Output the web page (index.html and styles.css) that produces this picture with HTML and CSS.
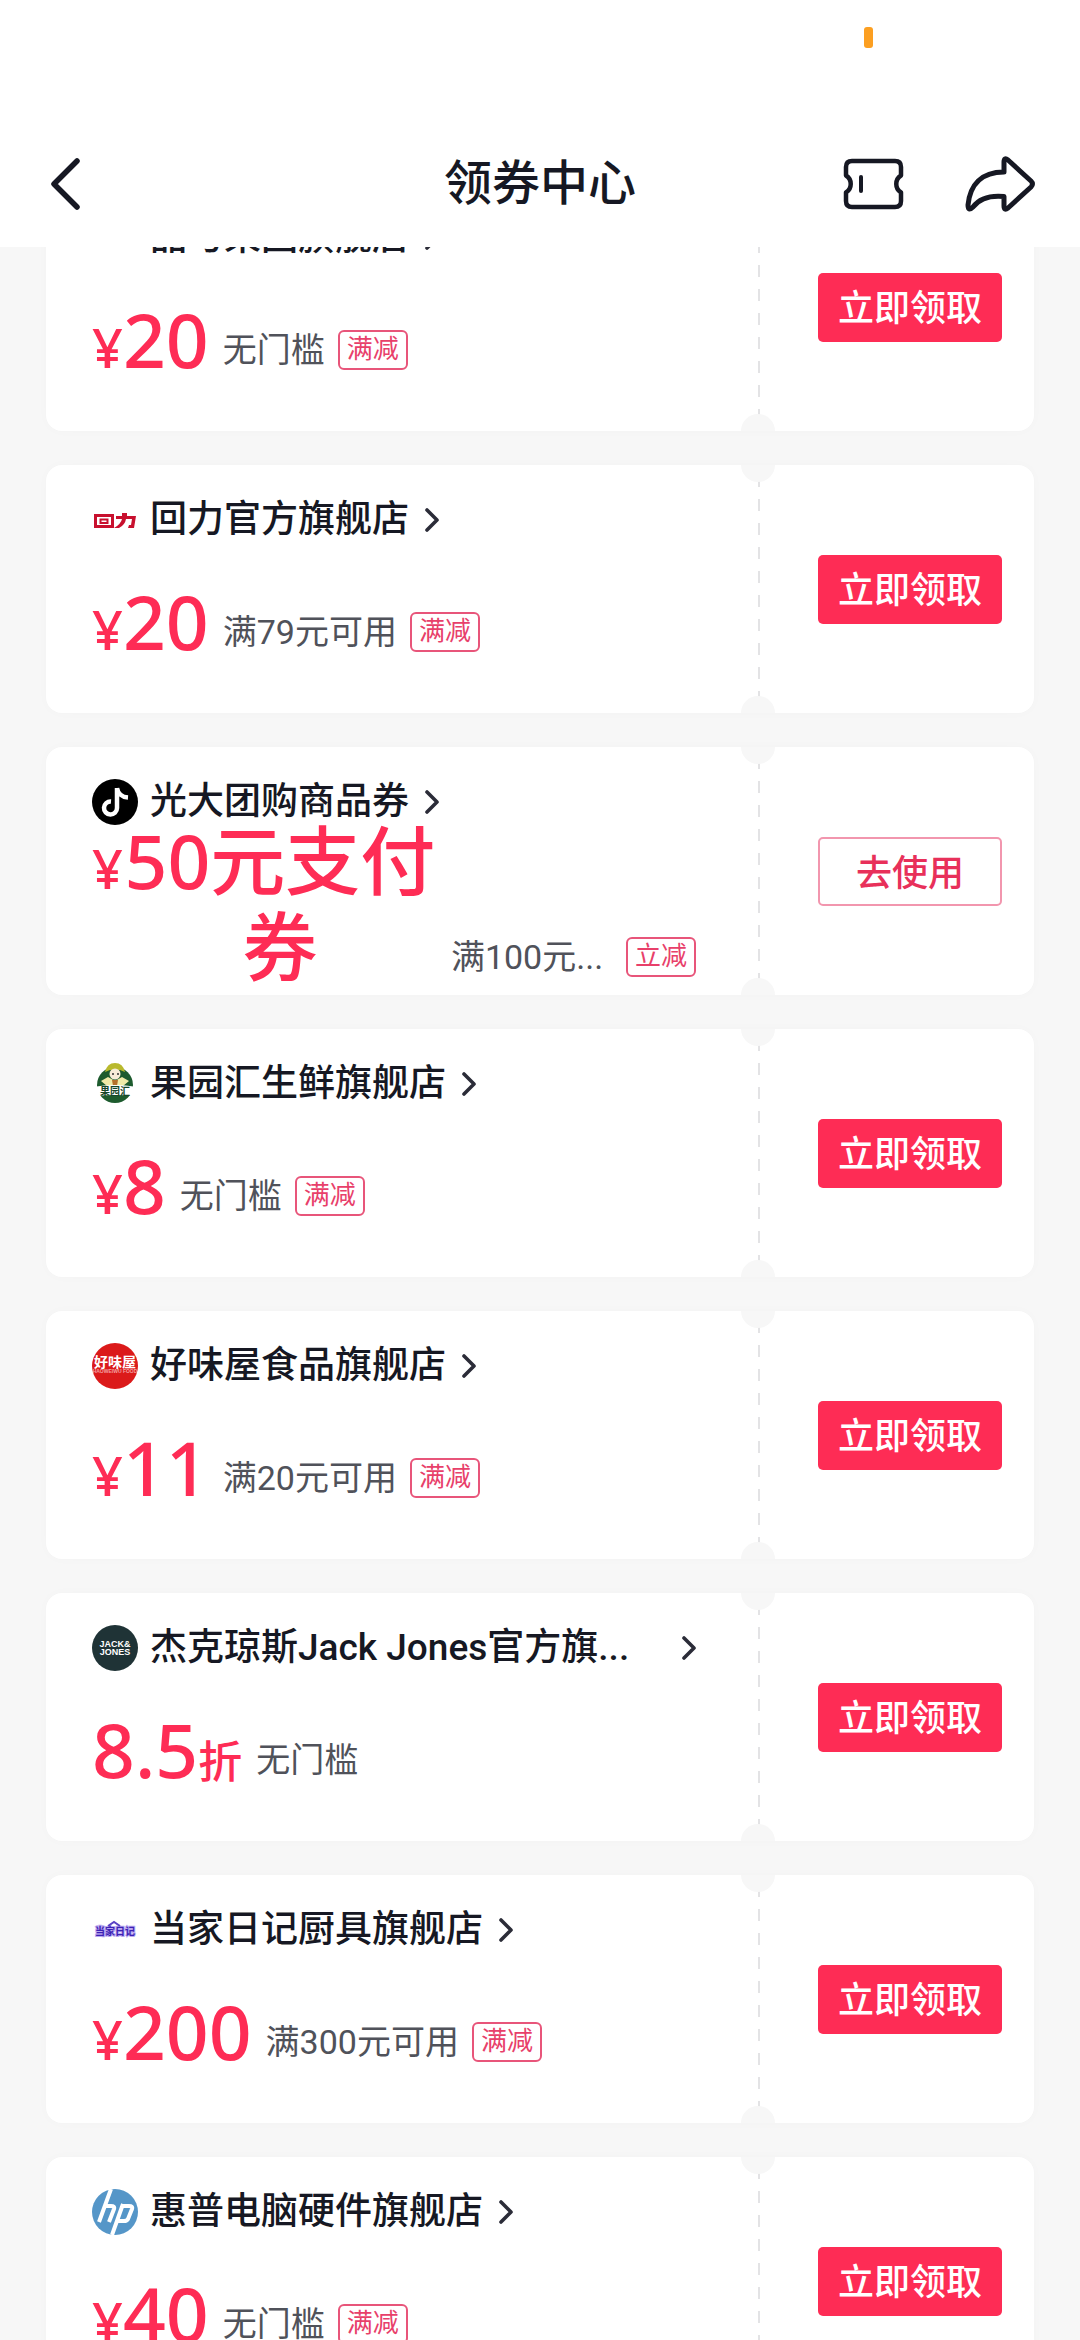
FILE: index.html
```html
<!DOCTYPE html>
<html lang="zh-CN">
<head>
<meta charset="utf-8">
<meta name="viewport" content="width=device-width, initial-scale=1">
<title>领券中心</title>
<link rel="stylesheet" href="styles.css">
</head>
<body>
<svg class="defs" aria-hidden="true">
  <symbol id="chevron" viewBox="0 0 14 24"><path d="M2 2L12 12L2 22" fill="none" stroke="#2b2c38" stroke-width="3.600" stroke-linecap="round" stroke-linejoin="round"/></symbol>
</svg>
<header class="topbar">
  <div class="status"><span class="status-dot"></span></div>
  <nav class="nav">
    <button class="icon-button nav-back" aria-label="返回">
      <svg width="60" height="60" viewBox="0 0 60 60"><path d="M33 7L10 30L33 53" fill="none" stroke="#161823" stroke-width="5.500" stroke-linecap="round" stroke-linejoin="round"/></svg>
    </button>
    <h1 class="title">领券中心</h1>
    <div class="nav-actions">
      <button class="icon-button" aria-label="我的券">
        <svg width="64" height="56" viewBox="0 0 64 56"><path d="M10 5H53Q59 5 59 11V19.500A10 10 0 0 0 59 36.500V45Q59 51 53 51H10Q4 51 4 45V36.500A10 10 0 0 0 4 19.500V11Q4 5 10 5Z" fill="none" stroke="#161823" stroke-width="4.500" stroke-linejoin="round"/><path d="M19 21V35" stroke="#161823" stroke-width="4" stroke-linecap="round"/></svg>
      </button>
      <button class="icon-button" aria-label="分享">
        <svg width="72" height="60" viewBox="0 0 72 60"><path d="M40 8Q40 3 44 6L67 27Q70 30 67 33L44 54Q40 57 40 52V42.500C24 41 15 45 9 53Q4 58 4 51C6 31 17 18 40 18Z" fill="none" stroke="#161823" stroke-width="5" stroke-linejoin="round"/></svg>
      </button>
    </div>
  </nav>
</header>
<main class="list">
  <article class="card">
    <div class="info">
      <a class="shop" href="#"><span class="logo"></span><span class="name">品与果园旗舰店</span><svg class="chevron"><use href="#chevron"/></svg></a>
      <div class="offer"><div class="terms"><p class="price"><span class="yen">¥</span><span class="amount">20</span></p><span class="condition">无门槛</span><span class="tag">满减</span></div></div>
    </div>
    <div class="action"><button class="claim">立即领取</button></div>
  </article>
  <article class="card">
    <div class="info">
      <a class="shop" href="#"><svg class="logo" viewBox="0 0 46 46"><g fill="none" stroke="#c8102e" stroke-width="3"><path d="M3.500 18.500H20.500V29.500H3.500Z"/><path d="M8.500 22.500H15.500V26H8.500Z" stroke-width="2"/></g><path d="M24 19H30V16H35V19H44L42 31H36L37 28H39L40 22H34Q33 28 27 31H22Q29 27 30 22H24Z" fill="#c8102e"/></svg><span class="name">回力官方旗舰店</span><svg class="chevron"><use href="#chevron"/></svg></a>
      <div class="offer"><div class="terms"><p class="price"><span class="yen">¥</span><span class="amount">20</span></p><span class="condition">满79元可用</span><span class="tag">满减</span></div></div>
    </div>
    <div class="action"><button class="claim">立即领取</button></div>
  </article>
  <article class="card">
    <div class="info">
      <a class="shop" href="#"><svg class="logo" viewBox="0 0 46 46"><circle cx="23" cy="23" r="23"/><path d="M25 9V29A6.500 6.500 0 1 1 19 22.500M25 9C26 15 29 18 36 18.500" fill="none" stroke="#fff" stroke-width="4.500"/></svg><span class="name">光大团购商品券</span><svg class="chevron"><use href="#chevron"/></svg></a>
      <div class="offer"><div class="terms terms-full"><p class="price"><span class="yen">¥</span><span class="amount">50元支付券</span></p><span class="condition">满100元...</span><span class="tag">立减</span></div></div>
    </div>
    <div class="action"><button class="claim claim-use">去使用</button></div>
  </article>
  <article class="card">
    <div class="info">
      <a class="shop" href="#"><svg class="logo" viewBox="0 0 46 46"><circle cx="23" cy="24" r="18" fill="#1d5b2e"/><path d="M13 11Q15 2 23 2Q31 2 33 11L28 9H18Z" fill="#b9b92e"/><circle cx="23" cy="13" r="5.500" fill="#f7ecd8"/><circle cx="21" cy="13" r="1" fill="#333"/><circle cx="26" cy="13" r="1" fill="#333"/><path d="M9 20L16 16L23 20L30 16L37 20L31 25H15Z" fill="#f0eaa8"/><path d="M20 19H26L25 25H21Z" fill="#b5702a"/><path d="M1 26Q23 22 45 26L42 35Q23 33 4 35Z" fill="#fff"/><text x="23" y="34" text-anchor="middle" class="logo-text" font-size="10" fill="#16462a">果园汇</text></svg><span class="name">果园汇生鲜旗舰店</span><svg class="chevron"><use href="#chevron"/></svg></a>
      <div class="offer"><div class="terms"><p class="price"><span class="yen">¥</span><span class="amount">8</span></p><span class="condition">无门槛</span><span class="tag">满减</span></div></div>
    </div>
    <div class="action"><button class="claim">立即领取</button></div>
  </article>
  <article class="card">
    <div class="info">
      <a class="shop" href="#"><svg class="logo" viewBox="0 0 46 46"><circle cx="23" cy="23" r="23" fill="#db1a1a"/><text x="23" y="24" text-anchor="middle" class="logo-text" font-size="14" fill="#fff">好味屋</text><text x="23" y="30" text-anchor="middle" class="logo-latin" font-size="5" fill="#f3a0a0">HAOWEIWU FOOD</text></svg><span class="name">好味屋食品旗舰店</span><svg class="chevron"><use href="#chevron"/></svg></a>
      <div class="offer"><div class="terms"><p class="price"><span class="yen">¥</span><span class="amount">11</span></p><span class="condition">满20元可用</span><span class="tag">满减</span></div></div>
    </div>
    <div class="action"><button class="claim">立即领取</button></div>
  </article>
  <article class="card">
    <div class="info">
      <a class="shop shop-full" href="#"><svg class="logo" viewBox="0 0 46 46"><circle cx="23" cy="23" r="23" fill="#1f3336"/><text x="23" y="22" text-anchor="middle" class="logo-latin" font-size="9" fill="#fff">JACK&amp;</text><text x="23" y="30" text-anchor="middle" class="logo-latin" font-size="9" fill="#fff">JONES</text></svg><span class="name">杰克琼斯Jack Jones官方旗...</span><svg class="chevron"><use href="#chevron"/></svg></a>
      <div class="offer"><div class="terms"><p class="price"><span class="amount">8.5</span><span class="unit">折</span></p><span class="condition">无门槛</span></div></div>
    </div>
    <div class="action"><button class="claim">立即领取</button></div>
  </article>
  <article class="card">
    <div class="info">
      <a class="shop" href="#"><svg class="logo" viewBox="0 0 46 46"><text x="23" y="28" text-anchor="middle" class="logo-text" font-size="10" fill="#3d22b4" stroke="#b9a8f0" stroke-width="2" paint-order="stroke">当家日记</text><path d="M16 19L22 15L28 19" fill="none" stroke="#5a42c4" stroke-width="2"/></svg><span class="name">当家日记厨具旗舰店</span><svg class="chevron"><use href="#chevron"/></svg></a>
      <div class="offer"><div class="terms"><p class="price"><span class="yen">¥</span><span class="amount">200</span></p><span class="condition">满300元可用</span><span class="tag">满减</span></div></div>
    </div>
    <div class="action"><button class="claim">立即领取</button></div>
  </article>
  <article class="card">
    <div class="info">
      <a class="shop" href="#"><svg class="logo" viewBox="0 0 46 46"><circle cx="23" cy="23" r="23" fill="#5596c8"/><path d="M19 0L7 33M13 17H19Q23 17 22 20L17 33M31 15L20 46M30 17H37Q41 17 40 20L36 30Q35 32 32 32H26" fill="none" stroke="#fff" stroke-width="4"/></svg><span class="name">惠普电脑硬件旗舰店</span><svg class="chevron"><use href="#chevron"/></svg></a>
      <div class="offer"><div class="terms"><p class="price"><span class="yen">¥</span><span class="amount">40</span></p><span class="condition">无门槛</span><span class="tag">满减</span></div></div>
    </div>
    <div class="action"><button class="claim">立即领取</button></div>
  </article>
</main>
</body>
</html>
```
FILE: styles.css
```css
* { box-sizing: border-box; margin: 0; padding: 0; }

html, body { height: 100%; }

body {
  display: flex;
  flex-direction: column;
  overflow: hidden;
  background: #f7f7f7;
  color: #161823;
  font-family: Roboto, "Noto Sans CJK SC", sans-serif;
}

button { font: inherit; border: 0; background: none; cursor: pointer; }

a { color: inherit; text-decoration: none; }

.defs { display: none; }

/* Top bar */
.topbar {
  flex: none;
  z-index: 1;
  background: #fff;
}

.status {
  display: flex;
  justify-content: flex-end;
  height: 120px;
  padding: 27px 207px 0 0;
}

.status-dot {
  width: 9px;
  height: 21px;
  border-radius: 3px;
  background: #fc9f21;
}

.nav {
  display: grid;
  grid-template-columns: 1fr auto 1fr;
  align-items: center;
  height: 127px;
  padding: 0 44px;
}

.icon-button { display: flex; }

.title {
  font-size: 48px;
  line-height: 64px;
  font-weight: 500;
}

.nav-actions {
  display: flex;
  align-items: center;
  justify-content: flex-end;
  gap: 58px;
}

/* Coupon list, scrolled so that its first card sits under the top bar */
.list {
  flex: 1;
  display: flex;
  flex-direction: column;
  justify-content: flex-start;
  gap: 34px;
  min-height: 0;
  margin-top: -64px;
  padding: 0 46px;
}

.card {
  position: relative;
  flex: none;
  display: grid;
  grid-template-columns: 1fr 276px;
  border-radius: 16px;
  background: #fff;
  box-shadow: 0 0 12px rgba(0, 0, 0, 0.02);
}

/* Round notches at both ends of the tear line */
.card::before,
.card::after {
  content: "";
  position: absolute;
  right: 259px;
  width: 34px;
  height: 17px;
  background: #f7f7f7;
}

.card::before { top: 0; border-radius: 0 0 17px 17px; }
.card::after { bottom: 0; border-radius: 17px 17px 0 0; }

.info {
  min-width: 0;
  padding: 32px 62px 14px 46px;
}

.shop {
  display: flex;
  align-items: center;
  height: 46px;
}

.shop-full .name { flex: 1; }

.logo { flex: none; width: 46px; height: 46px; margin-right: 12px; }

.logo-text { font-family: "Noto Sans CJK SC", sans-serif; font-weight: 700; }
.logo-latin { font-family: "Liberation Sans", sans-serif; font-weight: 700; }

.name {
  overflow: hidden;
  font-size: 37px;
  line-height: 54px;
  font-weight: 500;
  white-space: nowrap;
  text-overflow: ellipsis;
}

.chevron { flex: none; width: 14px; height: 24px; margin-left: 16px; }

.offer {
  display: flex;
  align-items: center;
  height: 156px;
}

.terms {
  display: flex;
  align-items: flex-end;
  min-width: 0;
}

.terms-full { width: 100%; }
.terms-full .condition { flex: 1; }

.price {
  flex: none;
  display: flex;
  align-items: baseline;
  color: #fe2c55;
  font-family: "Noto Sans", "Noto Sans CJK SC", sans-serif;
  font-weight: 500;
  line-height: 86px;
}

.yen,
.unit { line-height: 54px; }

.yen { font-size: 54px; }

.amount {
  max-width: 314px;
  font-size: 75px;
  text-align: center;
}

.unit { font-size: 44px; }

.condition {
  overflow: hidden;
  margin: 0 0 9px 14px;
  color: #50525a;
  font-size: 34px;
  line-height: 46px;
  white-space: nowrap;
  text-overflow: ellipsis;
}

.tag {
  flex: none;
  margin: 0 0 12px 13px;
  padding: 0 7px 2px;
  border: 2px solid #e8557a;
  border-radius: 6px;
  color: #e8406a;
  font-size: 26px;
  line-height: 34px;
}

/* Right side, past the tear line */
.action {
  display: flex;
  align-items: center;
  justify-content: flex-end;
  padding-right: 32px;
  background: repeating-linear-gradient(#e3e3e5 0 12px, transparent 12px 24px) 0 10px / 2px 100% no-repeat;
}

.claim {
  width: 184px;
  height: 69px;
  padding-bottom: 5px;
  border-radius: 5px;
  background: #fe2c55;
  color: #fff;
  font-size: 36px;
  font-weight: 500;
}

.claim-use {
  border: 2px solid #f296ae;
  padding-bottom: 3px;
  background: #fff;
  color: #e8305a;
}
```
